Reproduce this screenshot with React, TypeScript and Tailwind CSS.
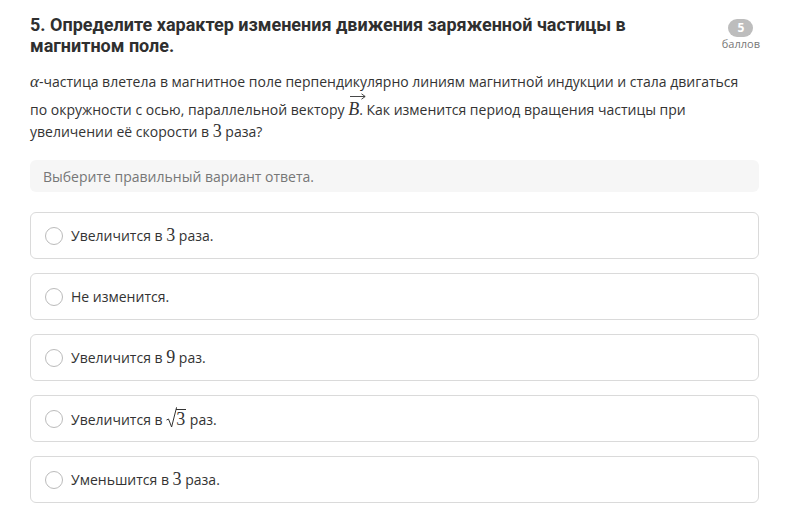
import React from "react";

const serif = "font-['Liberation_Serif',serif] text-[18px] leading-[18px]";

function Sqrt3() {
  return (
    <span className="inline-flex items-end align-[-3px] font-['Liberation_Serif',serif] text-[18px] leading-[18px]">
      <svg width="11" height="21" viewBox="0 0 11 21" className="mr-[-1px]">
        <polyline points="0.5,13 2.5,12 5.6,20 10.5,0.6 11,0.6" fill="none" stroke="#333" strokeWidth="1" />
      </svg>
      <span className="border-t border-[#333] pr-[1px]">3</span>
    </span>
  );
}

const options = [
  <>Увеличится в <span className={serif}>3</span> раза.</>,
  <>Не изменится.</>,
  <>Увеличится в <span className={serif}>9</span> раз.</>,
  <>
    Увеличится в <Sqrt3 /> раз.
  </>,
  <>Уменьшится в <span className={serif}>3</span> раза.</>,
];

export default function App() {
  return (
    <div className="min-h-[522px] w-[812px] bg-white font-['Open_Sans',sans-serif] text-[#333]">
      <div className="px-[30px] pt-[14px] w-[789px]">
        <div className="flex items-start justify-between">
          <h2 className="w-[640px] font-['Roboto',sans-serif] text-[18px] font-bold leading-[21px] text-[#2f2f2f]">
            5. Определите характер изменения движения заряженной частицы в магнитном поле.
          </h2>
          <div className="mr-[-1px] flex flex-col items-center pt-[5px]">
            <span className="flex h-[18px] w-[25px] items-center justify-center rounded-full bg-[#bdbdbd] text-[12px] font-bold text-white">
              5
            </span>
            <span className="text-[11px] leading-[14px] text-[#777]">баллов</span>
          </div>
        </div>
        <p className="mt-[15px] text-[14px] leading-[22px]">
          <span className="font-['Liberation_Serif',serif] text-[17px] italic leading-[17px]">α</span>-частица влетела в магнитное поле перпендикулярно линиям магнитной индукции и стала двигаться
          по окружности с осью, параллельной вектору{" "}
          <span className="relative inline-block pt-[8px] font-['Liberation_Serif',serif] text-[18px] italic leading-[17px]">
            <svg width="16" height="7" viewBox="0 0 16 7" className="absolute left-[2px] top-[0px]">
              <line x1="0" y1="3.5" x2="15" y2="3.5" stroke="#333" strokeWidth="0.9" />
              <polyline points="11.5,0.8 15.2,3.5 11.5,6.2" fill="none" stroke="#333" strokeWidth="0.9" />
            </svg>
            B
          </span>
          . Как изменится период вращения частицы при увеличении её скорости в{" "}
          <span className={serif}>3</span> раза?
        </p>
        <div className="mt-[17px] flex h-[32px] items-center rounded-[6px] bg-[#f6f6f6] px-[13px] text-[14px] text-[#777]">
          Выберите правильный вариант ответа.
        </div>
        <div className="mt-[20px] flex flex-col gap-[14px]">
          {options.map((o, i) => (
            <div
              key={i}
              className="flex h-[47px] items-center gap-[8px] rounded-[6px] border border-[#dadada] px-[14px] text-[14px]"
            >
              <span className="h-[18px] w-[18px] shrink-0 rounded-full border border-[#bbb]" />
              <span>{o}</span>
            </div>
          ))}
        </div>
      </div>
    </div>
  );
}
